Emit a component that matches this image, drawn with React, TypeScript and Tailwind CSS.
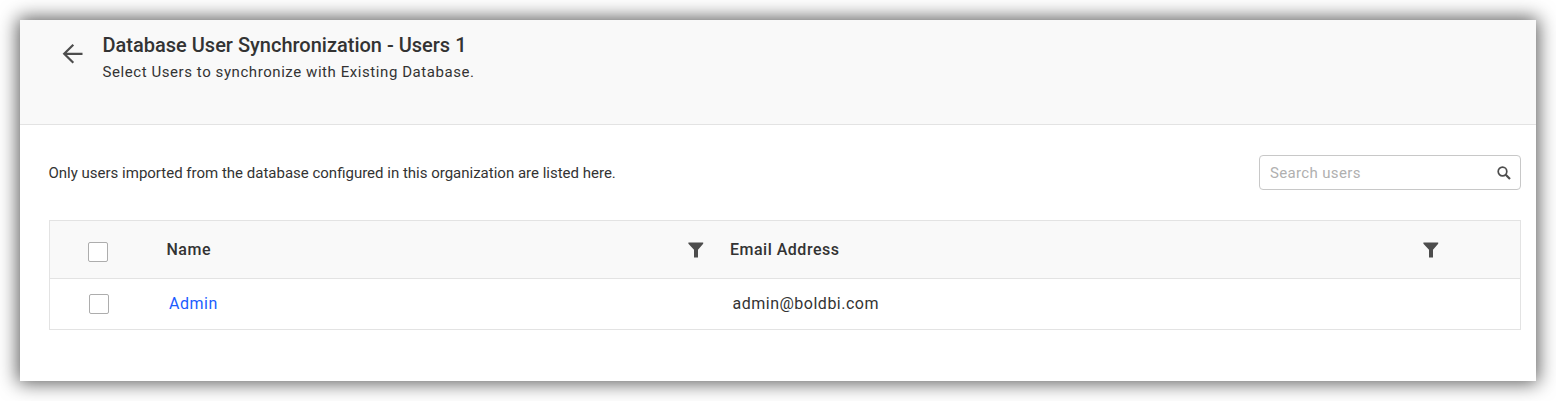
import React from "react";

function Funnel() {
  return (
    <svg width="16" height="16" viewBox="0 0 16 16" fill="#4d4d4d" className="-ml-px block">
      <path d="M.4.6h14.800v1.200L10 7.800V15.400H6V7.800L.4 1.800Z" />
    </svg>
  );
}

function Box() {
  return <span className="block h-5 w-5 rounded-[2px] border border-[#adadad] bg-white" />;
}

export default function App() {
  return (
    <div className="h-[401px] w-[1556px] overflow-hidden bg-white p-5 font-['Roboto',sans-serif] text-[#333]">
      <main className="h-[361px] w-[1516px] bg-white shadow-[0_0_18px_2px_rgba(0,0,0,0.66)]">
        <header className="flex h-[105px] border-b border-[#e3e3e3] bg-[#f9f9f9] pl-[42px]">
          <svg width="21" height="20" viewBox="0 0 21 20" fill="none" stroke="#4d4d4d" strokeWidth="2.2" className="mt-6 mr-[19.5px] shrink-0">
            <path d="M20.500 9.800H2.500M11.300.8 2.200 9.800l9.100 9" />
          </svg>
          <div className="whitespace-nowrap pt-[13px]">
            <h1 className="text-[20px] leading-6 font-medium">Database User Synchronization - Users 1</h1>
            <p className="mt-[5px] text-[15px] leading-5 tracking-[0.57px]">Select Users to synchronize with Existing Database.</p>
          </div>
        </header>
        <section className="pt-[30px] pr-[15px] pl-[29px]">
          <div className="flex h-[35px] items-center justify-between">
            <p className="-ml-[0.5px] pt-px text-[15px]">Only users imported from the database configured in this organization are listed here.</p>
            <div className="flex h-[35px] w-[262px] items-center justify-between rounded-[4px] border border-[#c8c8c8] pr-[9px] pl-[10px]">
              <span className="pt-[2px] text-[15px] text-[#b0b0b0] tracking-[0.35px]">Search users</span>
              <svg width="14" height="14" viewBox="0 0 14 14" fill="none" stroke="#4d4d4d">
                <circle cx="5.500" cy="5.500" r="4.300" strokeWidth="1.700" />
                <path d="m8.700 8.700 4.300 4.300" strokeWidth="2.200" />
              </svg>
            </div>
          </div>
          <div className="mt-[30px] h-[110px] border border-[#e3e3e3]">
            <div className="grid h-[58px] grid-cols-[117px_522px_41px_694px_1fr] items-center border-b border-[#e3e3e3] bg-[#f9f9f9] text-[16px] font-medium tracking-[0.5px]">
              <div className="pt-[5px] pl-[38px]"><Box /></div>
              <div className="-ml-[0.5px]">Name</div>
              <div><Funnel /></div>
              <div>Email Address</div>
              <div><Funnel /></div>
            </div>
            <div className="grid h-[50px] grid-cols-[119px_563.5px_1fr] items-center text-[16px] tracking-[0.5px]">
              <div className="pl-[39px]"><Box /></div>
              <div className="text-[#1a5cff]">Admin</div>
              <div>admin@boldbi.com</div>
            </div>
          </div>
        </section>
      </main>
    </div>
  );
}
